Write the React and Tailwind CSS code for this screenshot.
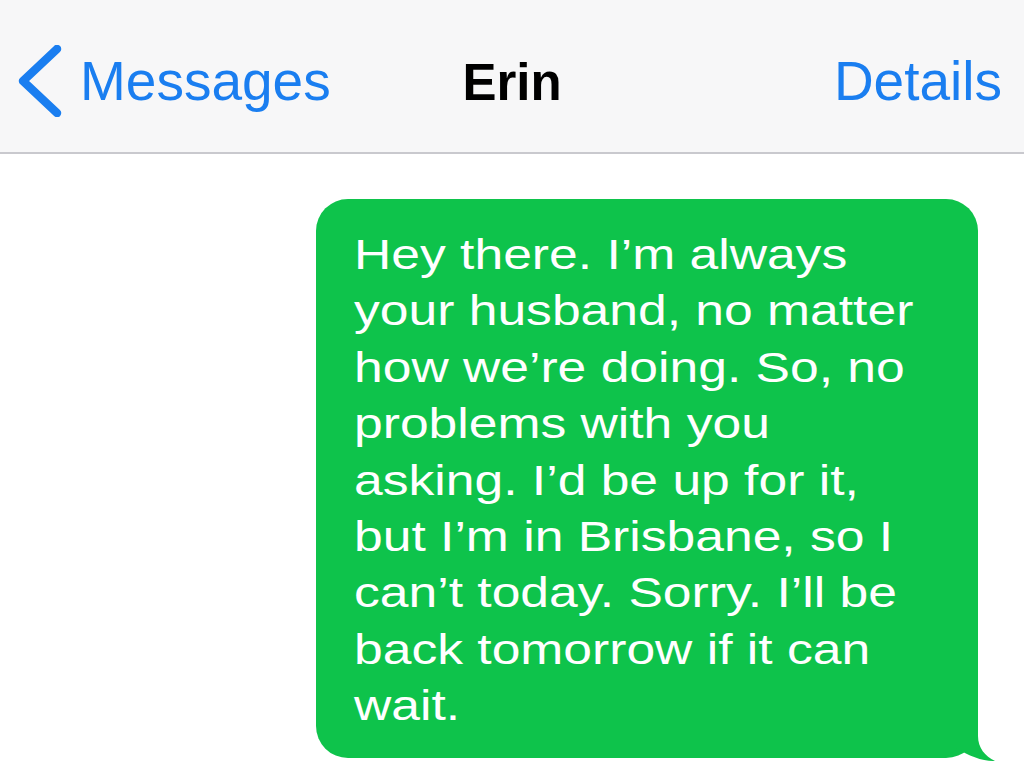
const lines = [
  'Hey there. I\u2019m always',
  'your husband, no matter',
  'how we\u2019re doing. So, no',
  'problems with you',
  'asking. I\u2019d be up for it,',
  'but I\u2019m in Brisbane, so I',
  'can\u2019t today. Sorry. I\u2019ll be',
  'back tomorrow if it can',
  'wait.',
]

function Header() {
  return (
    <div className="relative flex h-[154px] items-center justify-between border-b-2 border-[#c9c9ce] bg-[#f7f7f8] pt-[10px] pl-[16px] pr-[22px]">
      <div className="flex items-center gap-[16px] text-[#1a7ef0]">
        <svg width="48" height="72" viewBox="0 0 48 72">
          <path d="M41 4 L7 36 L41 68" fill="none" stroke="currentColor" strokeWidth="8.5" strokeLinecap="round" strokeLinejoin="round" />
        </svg>
        <span className="text-[55px] leading-none">Messages</span>
      </div>
      <span className="absolute left-1/2 top-[57px] -translate-x-1/2 text-[51px] font-bold leading-none text-black">Erin</span>
      <span className="text-[55px] leading-none text-[#1a7ef0]">Details</span>
    </div>
  )
}

function Bubble() {
  return (
    <div className="relative mr-[46px] ml-auto w-[662px]">
      <div className="rounded-[32px] bg-[#0ec34b] pl-[38px] pt-[27px] pb-[24px] text-[43px] leading-[56.4px] text-white">
        <div className="origin-left scale-x-[1.2]">
          {lines.map((l) => (
            <div key={l} className="whitespace-nowrap">{l}</div>
          ))}
        </div>
      </div>
      <svg className="absolute bottom-[-5px] right-[-22px]" width="60" height="62" viewBox="0 0 60 62">
        <path d="M38 0 L38 35 C38 47 45 55 55 60 C45 61 28 55 17 47 C12 53 6 57 0 57 L0 0 Z" fill="#0ec34b" />
      </svg>
    </div>
  )
}

export default function App() {
  return (
    <div className="h-[769px] w-[1024px] overflow-hidden bg-white font-['Liberation_Sans',Arial,sans-serif]">
      <Header />
      <div className="pt-[45px]">
        <Bubble />
      </div>
    </div>
  )
}
